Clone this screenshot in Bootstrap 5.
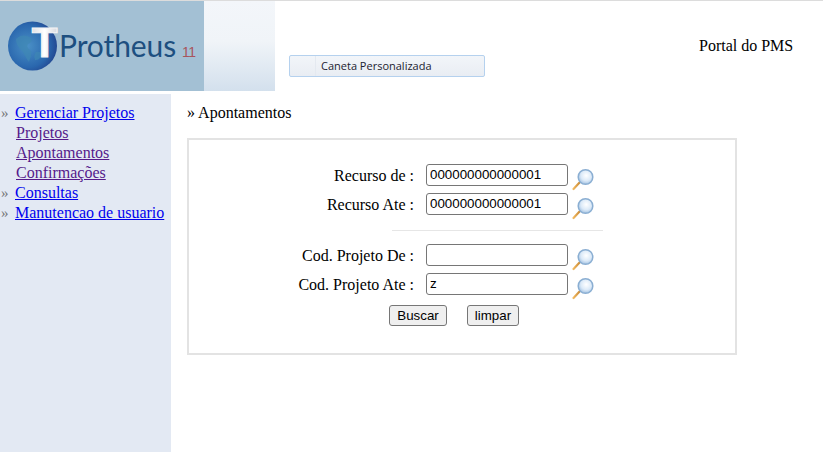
<!DOCTYPE html>
<html lang="pt">
<head>
<meta charset="utf-8">
<title>Portal do PMS</title>
<link href="https://cdn.jsdelivr.net/npm/bootstrap@5.3.0/dist/css/bootstrap.min.css" rel="stylesheet">
<style>
html,body{height:452px;overflow:hidden}
body{font-family:"Liberation Serif",serif;font-size:16px;line-height:20px;color:#000;background:#fff;border-top:1px solid #dcdcdc}
.hdr{height:90px}
.logo-box{width:204px;background:#a3c0d4}
.logo-name{font-family:Lato,sans-serif;font-size:30px;line-height:1;color:#1d4f80;letter-spacing:-.1px;margin-left:1px;padding-bottom:2px;white-space:nowrap}
.logo-ver{font-family:"Liberation Sans",sans-serif;font-size:14px;color:#a8545c;margin-left:6px;letter-spacing:-.5px}
.logo-mark{width:50px;height:50px;margin-left:8px;flex:none;overflow:visible}
.fade-box{width:71px;background:linear-gradient(#f3f6fa 0,#f0f4f8 45%,#d3e0ed 100%)}
.pers-wrap{width:424px;padding:54px 0 0 14px}
.pers-btn{width:196px;height:22px;border:1px solid #b5d1ee;border-radius:2px;background:linear-gradient(#f2f5f9,#e9edf3);font-family:"Open Sans",sans-serif;font-size:11px;line-height:20px;color:#1c2330}
.pers-ico{width:26px;height:20px;border-right:1px solid #e4e9f0}
.pers-txt{padding-left:5px}
.portal{padding-top:35px}
.main-area{margin-top:3px;height:358px}
.side{width:171px;background:#e3e9f3;padding-top:9px;flex:none}
.side-row{height:20px;padding-left:1px;white-space:nowrap}
.side-row a{color:#00e}
.side-row a.seen{color:#551a8b;margin-left:1px}
.mark-g{display:inline-block;width:14px;font-size:15px;color:#777}
.content{padding:9px 0 0 16px}
.crumb{height:20px;white-space:nowrap}
.panel-box{width:550px;height:217px;margin-top:15px;border:2px solid #e3e3e3;padding-top:24px}
.frow{height:22px;margin-bottom:7px}
.frow.last{margin-bottom:10px}
.lbl{width:225px;text-align:right;padding-top:2px;flex:none;white-space:nowrap}
.finput{width:142px;height:22px;margin-left:12px;border:1px solid #767676;border-radius:3px;padding:0 3px 2px;font-family:"Liberation Sans",sans-serif;font-size:13.33px;color:#000;background:#fff;outline:none;flex:none}
.lupa{width:24px;height:24px;margin:3px 0 0 3px;flex:none}
.sep{width:211px;height:1px;background:#e6e6e6;margin:15px 0 13px 203px}
.fbtn{height:21px;border:1px solid #767676;border-radius:3px;background:#efefef;font-family:"Liberation Sans",sans-serif;font-size:13.33px;line-height:17px;padding:0;color:#000}
.b1{width:58px;margin-left:200px}
.b2{width:52px;margin-left:20px}
</style>
</head>
<body>
<svg width="0" height="0" class="position-absolute">
<defs>
<radialGradient id="lg" cx=".55" cy=".4" r=".6"><stop offset="0" stop-color="#fff"/><stop offset=".6" stop-color="#dceaf8"/><stop offset="1" stop-color="#a5c3e2"/></radialGradient>
<linearGradient id="hg" x1="0" y1="0" x2="1" y2="0"><stop offset="0" stop-color="#f0b860"/><stop offset="1" stop-color="#c98a35"/></linearGradient>
<symbol id="lupa-i" viewBox="0 0 24 24">
<line x1="2.500" y1="22" x2="9" y2="15" stroke="url(#hg)" stroke-width="2.2" stroke-linecap="round"/>
<circle cx="14.500" cy="10" r="7.300" fill="url(#lg)" stroke="#8aaed2" stroke-width="1.5"/>
</symbol>
</defs>
</svg>
<div class="d-flex hdr">
  <div class="logo-box d-flex align-items-center">
    <svg class="logo-mark" viewBox="0 0 50 50">
      <defs>
        <radialGradient id="gl" cx=".4" cy=".5" r=".62"><stop offset="0" stop-color="#4a90c6"/><stop offset=".7" stop-color="#2a67ae"/><stop offset="1" stop-color="#22458f"/></radialGradient>
        <linearGradient id="tg" x1="0" y1="0" x2="1" y2="0"><stop offset="0" stop-color="#dfe0e4"/><stop offset=".5" stop-color="#fff"/><stop offset="1" stop-color="#d6d7dc"/></linearGradient>
      </defs>
      <circle cx="24.500" cy="25" r="24.500" fill="url(#gl)"/>
      <path d="M8 18c5-5 11-4 15-1 2 3-1 5-3 6-2 3 1 5 3 7 1 4-1 8-2 11-3-3-4-7-6-10-3-3-7-7-7-13z" fill="#3f87b4" opacity=".7"/>
      <path d="M28 31c3-1 6 1 6 3-2 4-4 5-7 5-1-3-1-6 1-8z" fill="#3f87b4" opacity=".7"/>
      <text x="36.500" y="36" font-family="Liberation Sans, sans-serif" font-weight="700" font-size="42" fill="url(#tg)" stroke="#f3f3f5" stroke-width="1.2" text-anchor="middle">T</text>
    </svg>
    <div class="logo-name">Protheus<span class="logo-ver">11</span></div>
  </div>
  <div class="fade-box"></div>
  <div class="pers-wrap"><div class="pers-btn d-flex"><div class="pers-ico"></div><div class="pers-txt">Caneta Personalizada</div></div></div>
  <div class="portal">Portal do PMS</div>
</div>
<div class="d-flex main-area">
  <nav class="side">
    <div class="side-row"><span class="mark-g">»</span><a href="#">Gerenciar Projetos</a></div>
    <div class="side-row"><span class="mark-g"></span><a class="seen" href="#">Projetos</a></div>
    <div class="side-row"><span class="mark-g"></span><a class="seen" href="#">Apontamentos</a></div>
    <div class="side-row"><span class="mark-g"></span><a class="seen" href="#">Confirmações</a></div>
    <div class="side-row"><span class="mark-g">»</span><a href="#">Consultas</a></div>
    <div class="side-row"><span class="mark-g">»</span><a href="#">Manutencao de usuario</a></div>
  </nav>
  <main class="content">
    <div class="crumb">» Apontamentos</div>
    <div class="panel-box">
      <div class="d-flex frow"><div class="lbl">Recurso de :</div><input class="finput" value="000000000000001"><svg class="lupa"><use href="#lupa-i"/></svg></div>
      <div class="d-flex frow"><div class="lbl">Recurso Ate :</div><input class="finput" value="000000000000001"><svg class="lupa"><use href="#lupa-i"/></svg></div>
      <div class="sep"></div>
      <div class="d-flex frow"><div class="lbl">Cod. Projeto De :</div><input class="finput" value=""><svg class="lupa"><use href="#lupa-i"/></svg></div>
      <div class="d-flex frow last"><div class="lbl">Cod. Projeto Ate :</div><input class="finput" value="z"><svg class="lupa"><use href="#lupa-i"/></svg></div>
      <div class="d-flex"><button class="fbtn b1" type="button">Buscar</button><button class="fbtn b2" type="button">limpar</button></div>
    </div>
  </main>
</div>
<script src="https://cdn.jsdelivr.net/npm/bootstrap@5.3.0/dist/js/bootstrap.bundle.min.js"></script>
</body>
</html>
